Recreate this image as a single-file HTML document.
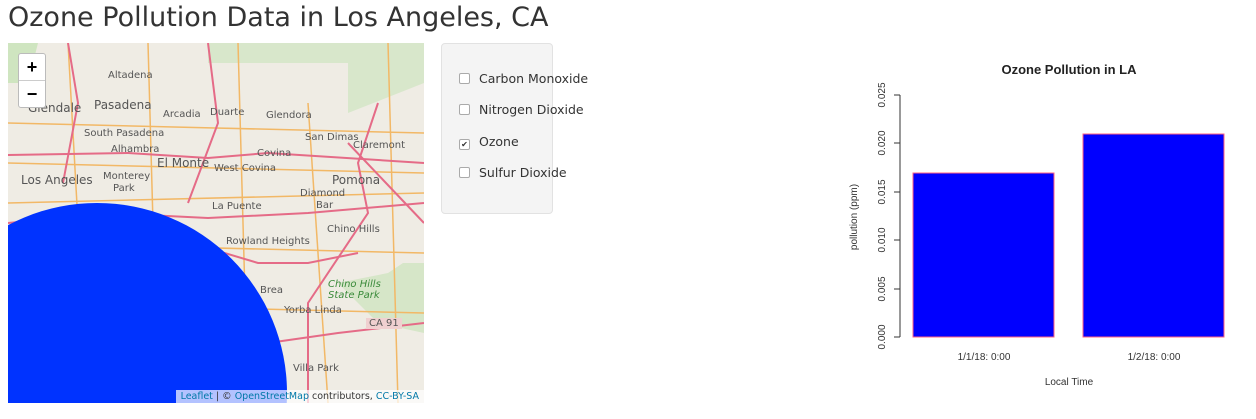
<!DOCTYPE html>
<html><head><style>
html,body{margin:0;width:1256px;height:419px;overflow:hidden}
body{background:#fff;font-family:"DejaVu Sans","Liberation Sans",sans-serif;position:relative}
h1{position:absolute;left:8px;top:2px;margin:0;font-size:27px;font-weight:400;color:#333}
#map{position:absolute;left:8px;top:43px;width:416px;height:360px;background:#efece4;overflow:hidden}
.lbl{position:absolute;font-size:10px;color:#555;white-space:nowrap}
.zoom{position:absolute;left:10px;top:10px;width:26px;background:#fff;border:1px solid #bbb;border-radius:3px}
.zoom div{height:26px;text-align:center;font:bold 18px/26px "Liberation Sans",sans-serif;color:#000}
.zoom div+div{border-top:1px solid #ccc}
#panel{position:absolute;left:441px;top:43px;width:110px;height:169px;background:#f4f4f4;border:1px solid #e2e2e2;border-radius:4px}
.cb{position:absolute;left:17px;font-size:12.5px;color:#333;white-space:nowrap}
.cb i{display:inline-block;width:9px;height:9px;border:1px solid #aaa;border-radius:2px;background:#fff;margin-right:9px;vertical-align:-1px;font-style:normal;font-size:8px;line-height:9px;text-align:center}
.attr{position:absolute;right:0;bottom:0;background:rgba(255,255,255,.7);font-size:9.5px;color:#333;padding:1px 5px;white-space:nowrap}
.attr a{color:#0078a8}
svg text{font-family:"Liberation Sans",sans-serif}
</style></head><body>
<h1>Ozone Pollution Data in Los Angeles, CA</h1>
<div id="map">
<svg width="416" height="360" style="position:absolute;left:0;top:0">
<path d="M150 0 L200 0 L200 20 L340 20 L340 70 L416 40 L416 0 Z" fill="#cfe5c0" opacity=".7"/>
<path d="M330 240 L380 230 L395 220 L416 220 L416 290 L370 280 Z" fill="#cfe5c0" opacity=".8"/>
<path d="M0 0 L30 0 L20 40 L0 40Z" fill="#cfe5c0"/>
<g stroke="#f2b866" stroke-width="1.5" fill="none">
<path d="M0 120 L416 130"/><path d="M0 160 L416 150"/><path d="M0 200 L416 210"/><path d="M60 0 L80 360"/><path d="M140 0 L150 360"/><path d="M230 0 L240 360"/><path d="M300 60 L320 360"/><path d="M380 0 L390 360"/><path d="M0 260 L416 270"/><path d="M0 80 L416 90"/>
</g>
<g stroke="#e56b87" stroke-width="2" fill="none">
<path d="M0 112 L120 110 L200 115 L260 110 L416 120"/>
<path d="M0 180 L100 170 L200 175 L300 170 L416 160"/>
<path d="M150 190 L250 220 L300 220 L350 210"/>
<path d="M370 60 L350 120 L360 170 L300 260 L300 360"/>
<path d="M200 0 L210 80 L180 160"/>
<path d="M60 0 L70 60 L55 140"/>
<path d="M260 300 L330 290 L416 280"/>
<path d="M340 100 L416 180"/>
</g>
<circle cx="89" cy="350" r="190" fill="#0033ff"/>
</svg>
<div class="lbl" style="left:100px;top:27px">Altadena</div>
<div class="lbl" style="left:20px;top:58px;font-size:12px">Glendale</div>
<div class="lbl" style="left:86px;top:55px;font-size:12px">Pasadena</div>
<div class="lbl" style="left:155px;top:66px">Arcadia</div>
<div class="lbl" style="left:202px;top:64px">Duarte</div>
<div class="lbl" style="left:258px;top:67px">Glendora</div>
<div class="lbl" style="left:76px;top:85px">South Pasadena</div>
<div class="lbl" style="left:103px;top:101px">Alhambra</div>
<div class="lbl" style="left:297px;top:89px">San Dimas</div>
<div class="lbl" style="left:345px;top:97px">Claremont</div>
<div class="lbl" style="left:249px;top:105px">Covina</div>
<div class="lbl" style="left:149px;top:113px;font-size:12px">El Monte</div>
<div class="lbl" style="left:206px;top:120px">West Covina</div>
<div class="lbl" style="left:13px;top:130px;font-size:12px">Los Angeles</div>
<div class="lbl" style="left:95px;top:128px">Monterey</div>
<div class="lbl" style="left:105px;top:140px">Park</div>
<div class="lbl" style="left:324px;top:130px;font-size:12px">Pomona</div>
<div class="lbl" style="left:292px;top:145px">Diamond</div>
<div class="lbl" style="left:308px;top:157px">Bar</div>
<div class="lbl" style="left:204px;top:158px">La Puente</div>
<div class="lbl" style="left:319px;top:181px">Chino Hills</div>
<div class="lbl" style="left:218px;top:193px">Rowland Heights</div>
<div class="lbl" style="left:252px;top:242px">Brea</div>
<div class="lbl" style="left:320px;top:236px;color:#3a8a3a;font-style:italic">Chino Hills</div>
<div class="lbl" style="left:320px;top:247px;color:#3a8a3a;font-style:italic">State Park</div>
<div class="lbl" style="left:276px;top:262px">Yorba Linda</div>
<div class="lbl" style="left:358px;top:275px;background:#f0d0d0;padding:0 3px">CA 91</div>
<div class="lbl" style="left:285px;top:320px">Villa Park</div>
<div class="zoom"><div>+</div><div>−</div></div>
<div class="attr"><a>Leaflet</a> | © <a>OpenStreetMap</a> contributors, <a>CC-BY-SA</a></div>
</div>
<div id="panel">
<div class="cb" style="top:27px"><i></i>Carbon Monoxide</div>
<div class="cb" style="top:58px"><i></i>Nitrogen Dioxide</div>
<div class="cb" style="top:90px"><i>✔</i>Ozone</div>
<div class="cb" style="top:121px"><i></i>Sulfur Dioxide</div>
</div>
<svg width="400" height="350" style="position:absolute;left:840px;top:50px">
<text x="229" y="24" font-size="13" font-weight="bold" text-anchor="middle" fill="#222">Ozone Pollution in LA</text>
<g stroke="#333" fill="none"><path d="M60 45 V287"/>
<path d="M54 45H60M54 93H60M54 142H60M54 190H60M54 239H60M54 287H60"/></g>
<g font-size="10" fill="#333" text-anchor="middle">
<text transform="translate(45,287) rotate(-90)">0.000</text>
<text transform="translate(45,239) rotate(-90)">0.005</text>
<text transform="translate(45,190) rotate(-90)">0.010</text>
<text transform="translate(45,142) rotate(-90)">0.015</text>
<text transform="translate(45,93) rotate(-90)">0.020</text>
<text transform="translate(45,45) rotate(-90)">0.025</text>
<text transform="translate(17,167) rotate(-90)">pollution (ppm)</text>
<text x="144" y="310">1/1/18: 0:00</text>
<text x="314" y="310">1/2/18: 0:00</text>
<text x="229" y="335">Local Time</text>
</g>
<rect x="73" y="123" width="141" height="164" fill="#0000ff" stroke="#ff6080" stroke-width="1"/>
<rect x="243" y="84" width="141" height="203" fill="#0000ff" stroke="#ff6080" stroke-width="1"/>
</svg>
</body></html>
